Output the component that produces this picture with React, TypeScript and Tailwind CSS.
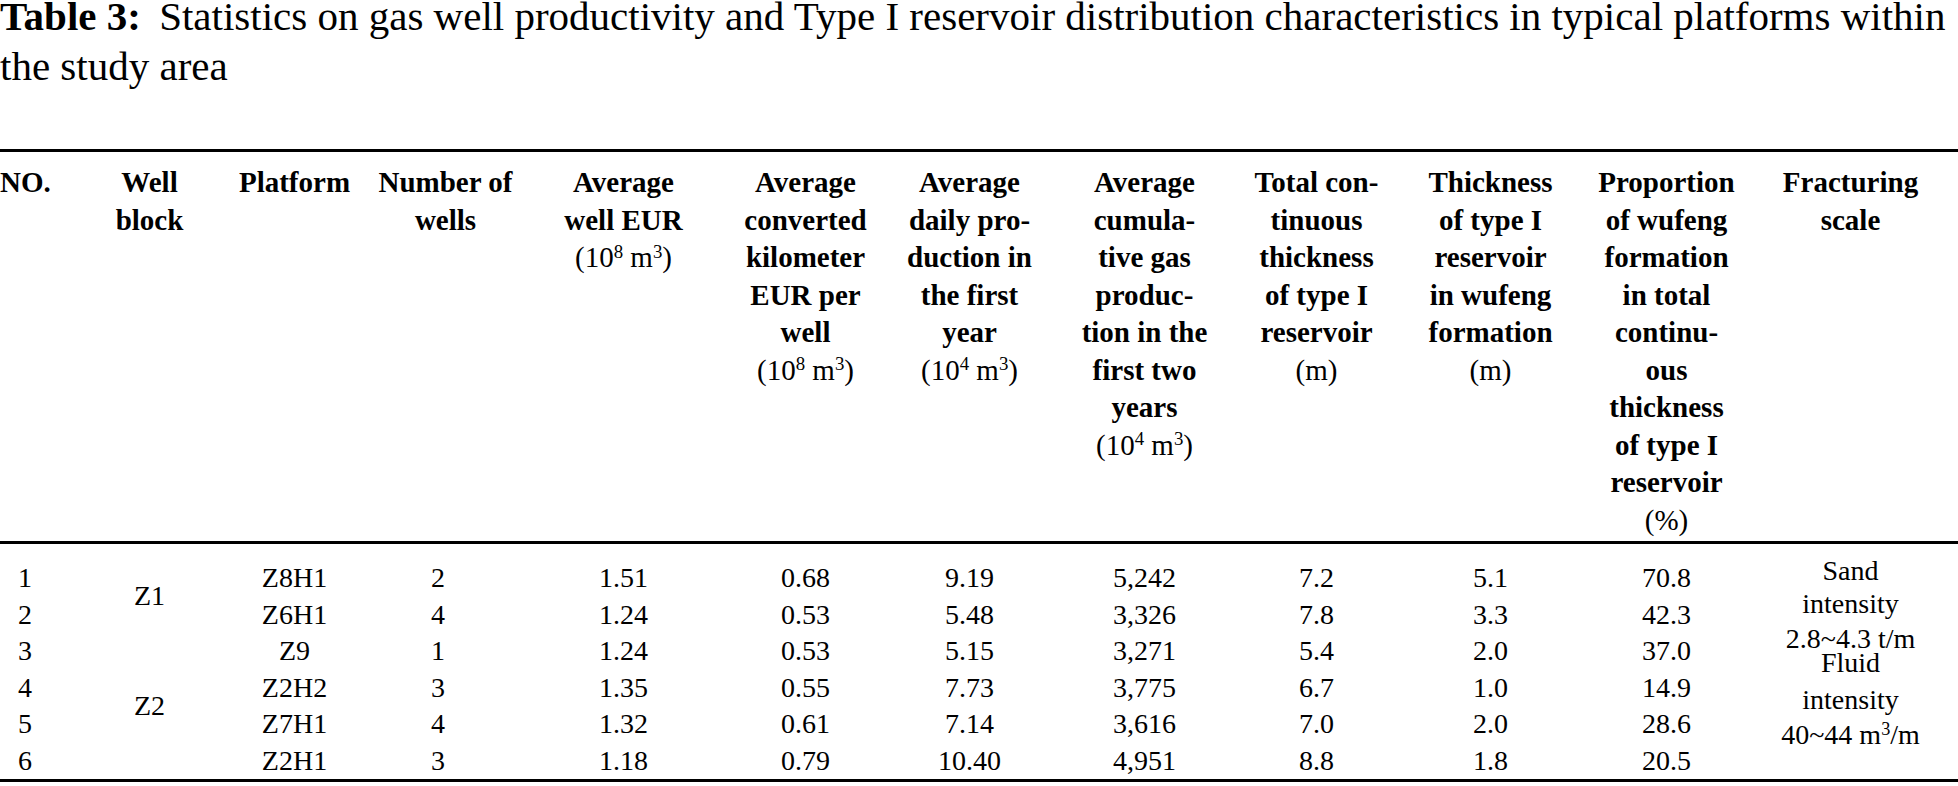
import React from "react";

const COLS =
  "grid grid-cols-[80px_139px_151px_151px_205px_159px_169px_181px_163px_185px_167px_201px_1fr]";

const U = ({ a, b }: { a: string; b: string }) => (
  <span className="font-normal">
    (10<sup className="text-[65%]">{a}</sup> m<sup className="text-[65%]">{b}</sup>)
  </span>
);

const HeadCell = ({
  lines,
  left,
}: {
  lines: React.ReactNode[];
  left?: boolean;
}) => (
  <div className={`flex flex-col ${left ? "items-start" : "items-center"}`}>
    {lines.map((l, i) => (
      <div key={i} className="whitespace-nowrap h-[37.5px] leading-[37.5px]">
        {l}
      </div>
    ))}
  </div>
);

const rows = [
  ["1", "Z8H1", "2", "1.51", "0.68", "9.19", "5,242", "7.2", "5.1", "70.8"],
  ["2", "Z6H1", "4", "1.24", "0.53", "5.48", "3,326", "7.8", "3.3", "42.3"],
  ["3", "Z9", "1", "1.24", "0.53", "5.15", "3,271", "5.4", "2.0", "37.0"],
  ["4", "Z2H2", "3", "1.35", "0.55", "7.73", "3,775", "6.7", "1.0", "14.9"],
  ["5", "Z7H1", "4", "1.32", "0.61", "7.14", "3,616", "7.0", "2.0", "28.6"],
  ["6", "Z2H1", "3", "1.18", "0.79", "10.40", "4,951", "8.8", "1.8", "20.5"],
];

const dataCols = [1, 3, 4, 5, 6, 7, 8, 9, 10, 11];

export default function App() {
  return (
    <div className="w-[1958px] h-[786px] bg-white text-black overflow-hidden font-['Liberation_Serif',serif]">
      <div className="text-[41px] leading-[50px] -mt-[9px] whitespace-nowrap">
        <span className="font-bold mr-[8px]">Table 3:</span> Statistics on gas well
        productivity and Type I reservoir distribution characteristics in typical
        platforms within
        <br />
        the study area
      </div>

      <div className="mt-[58px] border-t-[3px] border-b-[3px] border-black">
        {/* header */}
        <div className={`${COLS} pt-[12px] pb-[2px] border-b-[3px] border-black text-[29px] font-bold`}>
          <HeadCell left lines={["NO."]} />
          <HeadCell lines={["Well", "block"]} />
          <HeadCell lines={["Platform"]} />
          <HeadCell lines={["Number of", "wells"]} />
          <HeadCell lines={["Average", "well EUR", <U a="8" b="3" />]} />
          <HeadCell
            lines={["Average", "converted", "kilometer", "EUR per", "well", <U a="8" b="3" />]}
          />
          <HeadCell
            lines={["Average", "daily pro-", "duction in", "the first", "year", <U a="4" b="3" />]}
          />
          <HeadCell
            lines={[
              "Average",
              "cumula-",
              "tive gas",
              "produc-",
              "tion in the",
              "first two",
              "years",
              <U a="4" b="3" />,
            ]}
          />
          <HeadCell
            lines={[
              "Total con-",
              "tinuous",
              "thickness",
              "of type I",
              "reservoir",
              <span className="font-normal">(m)</span>,
            ]}
          />
          <HeadCell
            lines={[
              "Thickness",
              "of type I",
              "reservoir",
              "in wufeng",
              "formation",
              <span className="font-normal">(m)</span>,
            ]}
          />
          <HeadCell
            lines={[
              "Proportion",
              "of wufeng",
              "formation",
              "in total",
              "continu-",
              "ous",
              "thickness",
              "of type I",
              "reservoir",
              <span className="font-normal">(%)</span>,
            ]}
          />
          <HeadCell lines={["Fracturing", "scale"]} />
          <div />
        </div>

        {/* body */}
        <div
          className={`${COLS} grid-rows-[repeat(6,36.5px)] pt-[16px] text-[28px] leading-[36.5px]`}
        >
          {rows.map((r, ri) =>
            r.map((v, ci) => {
              const col = dataCols[ci];
              const cls =
                col === 1 ? "pl-[18px]" : col === 4 ? "text-center pr-[15px]" : "text-center";
              return (
                <div
                  key={`${ri}-${ci}`}
                  style={{ gridRow: ri + 1, gridColumn: col }}
                  className={`whitespace-nowrap ${cls}`}
                >
                  {v}
                </div>
              );
            })
          )}
          <div className="col-start-2 row-start-1 row-span-2 flex items-center justify-center">
            Z1
          </div>
          <div className="col-start-2 row-start-4 row-span-2 flex items-center justify-center">
            Z2
          </div>
          <div className="col-start-12 row-start-1 row-span-6 flex flex-col items-center">
            <div className="h-[36px] leading-[36px] -mt-[7px]">Sand</div>
            <div className="h-[36px] leading-[36px] -mt-[3px]">intensity</div>
            <div className="h-[36px] leading-[36px] -mt-[1px]">2.8~4.3 t/m</div>
            <div className="h-[36px] leading-[36px] -mt-[12px]">Fluid</div>
            <div className="h-[36px] leading-[36px] mt-[1px]">intensity</div>
            <div className="h-[36px] leading-[36px] -mt-[1px]">
              40~44 m<sup className="text-[65%]">3</sup>/m
            </div>
          </div>
        </div>
      </div>
    </div>
  );
}
